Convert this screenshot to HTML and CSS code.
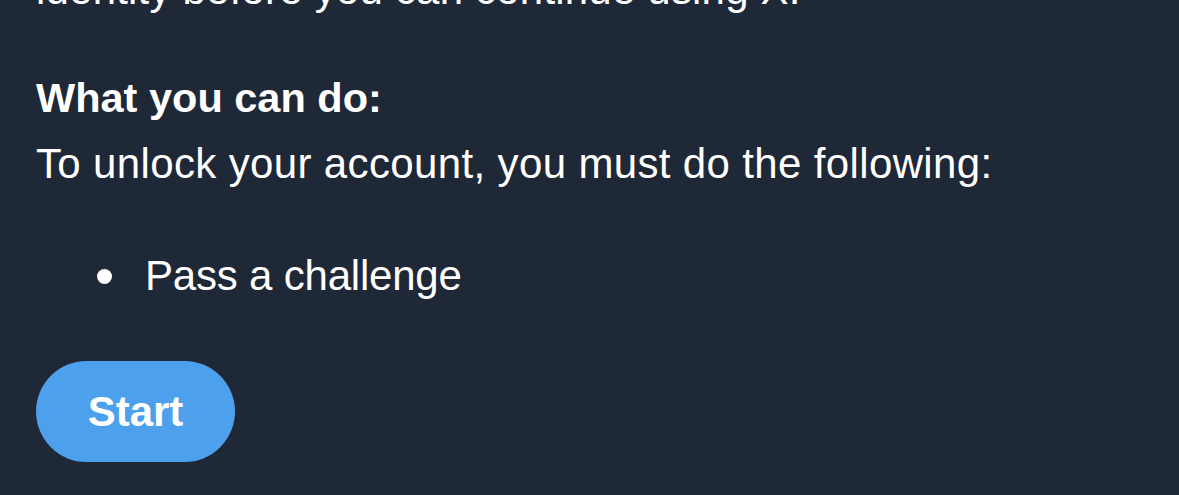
FILE: index.html
```html
<!DOCTYPE html>
<html lang="en">
<head>
<meta charset="utf-8">
<title>Account locked</title>
<link rel="stylesheet" href="styles.css">
</head>
<body>
<main class="page">
  <p class="intro">identity before you can continue using X.</p>
  <h2 class="heading">What you can do:</h2>
  <p class="text">To unlock your account, you must do the following:</p>
  <ul class="steps">
    <li class="step"><span class="dot"></span><span>Pass a challenge</span></li>
  </ul>
  <button class="start" type="button">Start</button>
</main>
</body>
</html>
```

FILE: styles.css
```css
html, body {
  margin: 0;
  padding: 0;
  background: #1f2836;
  height: 100%;
  overflow: hidden;
}
.page {
  padding-left: 36px;
  color: #ffffff;
  font-family: "Liberation Sans", Arial, Helvetica, sans-serif;
  font-size: 42px;
  line-height: 50px;
  display: flex;
  flex-direction: column;
  align-items: flex-start;
}
.intro {
  margin: -35px 0 0 0;
  letter-spacing: 0.2px;
}
.heading {
  margin: 58px 0 0 0;
  font-size: 41.5px;
  font-weight: 700;
}
.text {
  margin: 16px 0 0 0;
  letter-spacing: 0.36px;
}
.steps {
  list-style: none;
  margin: 62px 0 0 0;
  padding: 0 0 0 61px;
}
.step {
  display: flex;
  align-items: center;
  gap: 33px;
  letter-spacing: -0.2px;
}
.dot {
  width: 15px;
  height: 15px;
  border-radius: 50%;
  background: #ffffff;
  margin-top: 0;
}
.start {
  margin-top: 60px;
  width: 199px;
  height: 101px;
  border: none;
  border-radius: 51px;
  background: #4da0eb;
  color: #ffffff;
  font-family: "Liberation Sans", Arial, Helvetica, sans-serif;
  font-size: 42px;
  font-weight: 700;
  line-height: 50px;
  padding: 0;
}
```
